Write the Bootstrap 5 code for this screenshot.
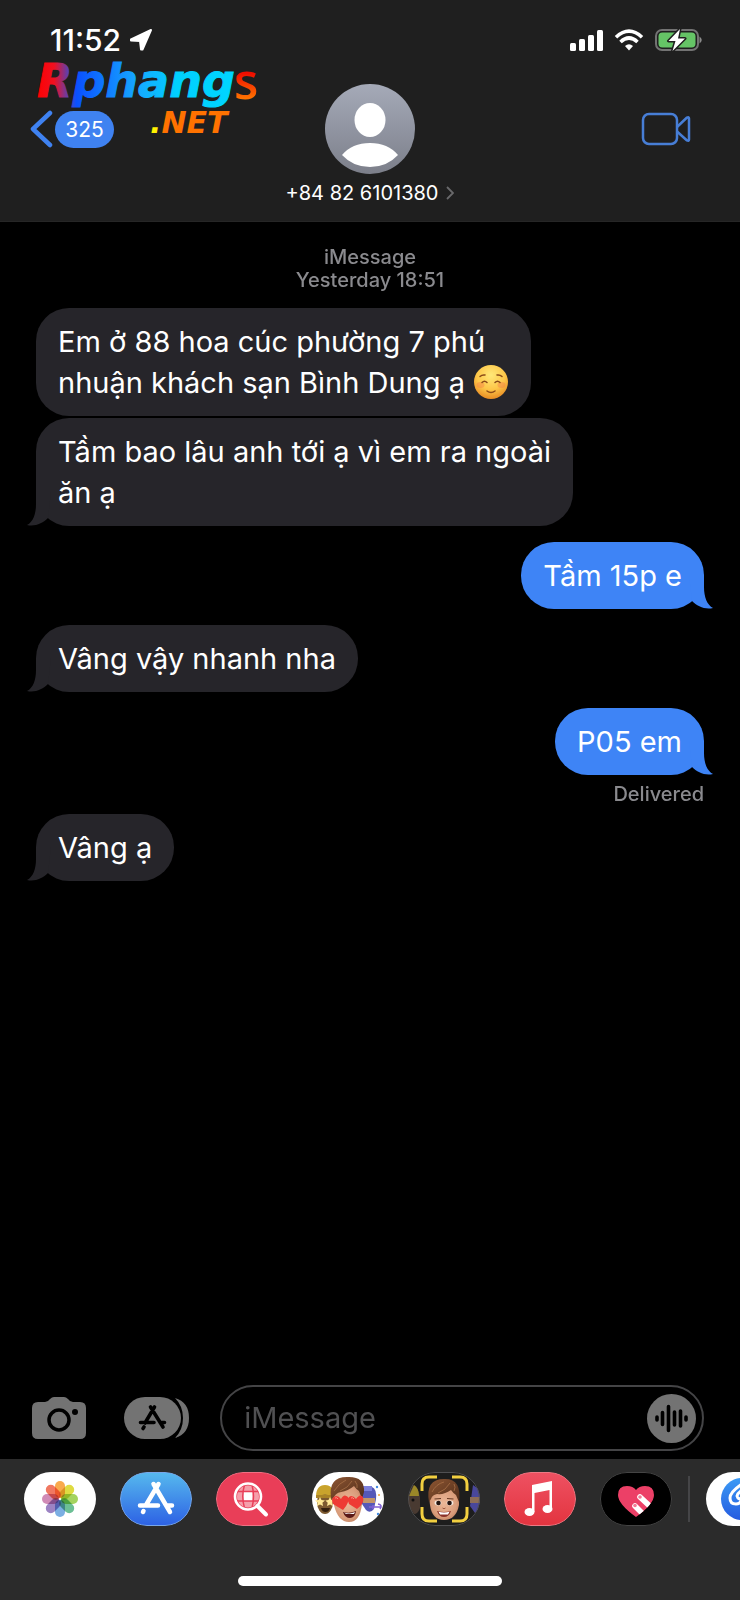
<!DOCTYPE html>
<html lang="vi">
<head>
<meta charset="utf-8">
<meta name="viewport" content="width=device-width, initial-scale=1">
<title>+84 82 6101380</title>
<link href="https://cdn.jsdelivr.net/npm/bootstrap@5.3.0/dist/css/bootstrap.min.css" rel="stylesheet">
<style>
body{background:#000;color:#fff;font-family:Inter,"Liberation Sans",sans-serif}
svg{display:block;flex:none}
.top-bar{background:#1f1f1f;padding:28px 30px 16px;border-bottom:1px solid #262626}
.status-row{height:24px;padding:0 8px 0 20px;margin-bottom:32px}
.clock{font-size:30px;line-height:24px;font-weight:500}
.site-logo{position:absolute;left:34px;top:54px;overflow:visible}
.nav-grid{display:grid;grid-template-columns:1fr auto 1fr;align-items:center}
.count-pill{background:#3f82f1;color:#fff;font-size:21px;line-height:37px;width:59px;border-radius:19px;text-align:center}
.video-btn{margin:0 19px 0 auto}
.contact-link{color:#fff;font-size:20px;line-height:24px;margin-top:7px}
.thread{padding:24px 36px 0}
.stamp{color:#8a8a8e;font-size:20px;line-height:23px;font-weight:500}
.bubble{position:relative;font-size:29px;line-height:41px;padding:13px 22px;border-radius:33px;width:fit-content}
.bubble-in{background:#26252a}
.bubble-out{background:#3e84f6;margin-left:auto}
.bubble-next{margin-top:2px}
.tail::after{content:"";position:absolute;bottom:0;left:-9px;width:24px;height:34px;background:inherit;clip-path:path("M9 0V12C9 22 6 30 0 33C8 35 16 31 21 26L24 0Z")}
.bubble-out.tail::after{left:auto;right:-9px;transform:scaleX(-1)}
.smile{display:inline-block;vertical-align:-7px}
.compose{padding:0 36px 8px 32px}
.compose-field{width:72%;height:66px;border:2px solid #444446;border-radius:33px;padding:0 6px 0 22px}
.compose-field input{font-size:29px;color:#fff;background:none;border:0;outline:0;min-width:0}
.compose-field input::placeholder{color:#505052;opacity:1}
.apps-btn{margin:0 30px 0 auto}
.drawer{background:#2b2b2b;padding:13px 0 14px}
.app-strip{gap:24px;padding-left:24px;margin-bottom:50px;overflow:hidden}
.app-pill{width:72px;height:54px;border-radius:27px;overflow:hidden;flex:none}
.strip-line{width:2px;height:46px;background:#454547;flex:none;margin:0 -8px}
.home-line{width:264px;height:10px;border-radius:5px;background:#fff}
.petals rect{mix-blend-mode:multiply}
</style>
</head>
<body>
<div class="d-flex flex-column min-vh-100 overflow-hidden">
<header class="top-bar position-relative">
  <div class="status-row d-flex align-items-center justify-content-between">
    <div class="d-flex align-items-center gap-2">
      <span class="clock">11:52</span>
      <svg width="24" height="24" viewBox="0 0 24 24" aria-hidden="true"><path d="M22 2 13.500 21.500H12L11 13 2 12.500V11.500Z" fill="#fff" stroke="#fff" stroke-width="2" stroke-linejoin="round"/></svg>
    </div>
    <svg width="134" height="24" viewBox="0 0 134 24" aria-hidden="true">
      <g fill="#fff"><rect x="2" y="15" width="6" height="8" rx="1.500"/><rect x="11" y="11" width="6" height="12" rx="1.500"/><rect x="20" y="7" width="6" height="16" rx="1.500"/><rect x="29" y="2" width="6" height="21" rx="1.500"/></g>
      <g fill="none" stroke="#fff" stroke-width="3.600"><path d="M48 9.200Q61 -2.800 74 9.200"/><path d="M52.500 14Q61 6 69.500 14"/></g><path d="M57 18Q61 14.500 65 18L61 22.500Z" fill="#fff"/>
      <rect x="88" y="2" width="42" height="20" rx="6" fill="none" stroke="#737373" stroke-width="2"/><rect x="90.500" y="4.500" width="37" height="15" rx="4" fill="#65c466"/><path d="M131.500 8.500Q136 12 131.500 15.500Z" fill="#8b8b8b"/>
      <path d="M112 1 100.500 13H107.500L104.500 23 117 10.500H110Z" fill="#fff" stroke="#1f1f1f" stroke-width="3" paint-order="stroke" stroke-linejoin="round"/>
    </svg>
  </div>
  <div class="nav-grid">
    <a href="#" class="d-flex align-items-center text-decoration-none" aria-label="Back">
      <svg width="25" height="38" viewBox="0 0 25 38"><path d="M20 3 3 19 20 35" fill="none" stroke="#3f82f1" stroke-width="4.500" stroke-linecap="round" stroke-linejoin="round"/></svg>
      <span class="count-pill">325</span>
    </a>
    <svg width="90" height="90" viewBox="0 0 90 90" role="img" aria-label="Contact photo"><defs><linearGradient id="av" x2="0" y2="1"><stop stop-color="#a5aab8"/><stop offset="1" stop-color="#7c7f8a"/></linearGradient></defs><circle cx="45" cy="45" r="45" fill="url(#av)"/><ellipse cx="45" cy="36" rx="15.500" ry="17" fill="#fff"/><path d="M17 71Q27 59 45 59T73 71Q62 83 45 83T17 71Z" fill="#fff"/></svg>
    <button class="btn p-0 border-0 video-btn" aria-label="Video call"><svg width="50" height="34" viewBox="0 0 50 34" fill="none" stroke="#477ed6" stroke-width="2.500" stroke-linejoin="round"><rect x="2" y="2" width="34" height="30" rx="6"/><path d="M36 15 46 5.500Q48 4.500 48 6.500V27.500Q48 29.500 46 28.500L36 19.500"/></svg></button>
  </div>
  <a href="#" class="contact-link d-flex justify-content-center align-items-center gap-2 text-decoration-none">+84 82 6101380
    <svg width="8" height="14" viewBox="0 0 8 14"><path d="M1 1 7 7 1 13" fill="none" stroke="#69696b" stroke-width="1.800"/></svg>
  </a>
  <svg class="site-logo" width="260" height="90" viewBox="0 0 260 90">
    <defs>
      <linearGradient id="lgA" gradientUnits="userSpaceOnUse" x1="2" x2="204" y1="0" y2="0"><stop stop-color="#f00"/><stop offset=".09" stop-color="#f01020"/><stop offset=".17" stop-color="#4447c8"/><stop offset=".2" stop-color="#0a50ff"/><stop offset=".5" stop-color="#16a8ff"/><stop offset=".7" stop-color="#00d0ff"/><stop offset="1" stop-color="#00d5ff"/></linearGradient>
      <linearGradient id="lgB" x2="0" y2="1"><stop offset=".4" stop-color="#f00d00"/><stop offset=".8" stop-color="#ff7a00"/></linearGradient>
      <linearGradient id="lgC" gradientUnits="userSpaceOnUse" x1="116" x2="192" y1="0" y2="0"><stop offset=".12" stop-color="#fff200"/><stop offset=".15" stop-color="#ff7200"/></linearGradient>
    </defs>
    <g font-family="'DejaVu Sans',sans-serif" font-weight="700" font-style="italic">
      <text x="3" y="43" font-size="46" fill="url(#lgA)" stroke="url(#lgA)" stroke-width="1">Rphang</text>
      <text x="116" y="79" font-size="30" fill="url(#lgC)">.NET</text>
    </g>
    <text x="200" y="45" font-family="'Open Sans',sans-serif" font-weight="600" font-size="50" fill="url(#lgB)">s</text>
  </svg>
</header>

<main class="thread flex-grow-1">
  <div class="stamp text-center">iMessage<br>Yesterday 18:51</div>
  <div class="bubble bubble-in mt-3">Em ở 88 hoa cúc phường 7 phú<br>nhuận khách sạn Bình Dung ạ <svg class="smile" width="36" height="36" viewBox="0 0 36 36" role="img" aria-label="☺️"><defs><radialGradient id="em" cx=".5" cy=".3" r=".7"><stop stop-color="#ffe878"/><stop offset=".6" stop-color="#fdc648"/><stop offset="1" stop-color="#e88c24"/></radialGradient></defs><circle cx="18" cy="18" r="17" fill="url(#em)"/><g fill="#f4784a" opacity=".4"><ellipse cx="7.500" cy="21" rx="4" ry="3"/><ellipse cx="28.500" cy="21" rx="4" ry="3"/></g><g fill="none" stroke="#8a4a18" stroke-width="1.500" stroke-linecap="round"><path d="M9 18.500Q11.500 16 14 18.500M22 18.500Q24.500 16 27 18.500M14 27Q18 30 22 27M7 12.500Q9 10.500 12 11M24 11Q27 10.500 29 12.500"/></g></svg></div>
  <div class="bubble bubble-in bubble-next tail">Tầm bao lâu anh tới ạ vì em ra ngoài<br>ăn ạ</div>
  <div class="bubble bubble-out tail mt-3">Tầm 15p e</div>
  <div class="bubble bubble-in tail mt-3">Vâng vậy nhanh nha</div>
  <div class="bubble bubble-out tail mt-3">P05 em</div>
  <div class="stamp text-end mt-2">Delivered</div>
  <div class="bubble bubble-in tail mt-2">Vâng ạ</div>
</main>

<form class="compose d-flex align-items-center">
  <button type="button" class="btn p-0 border-0" aria-label="Camera"><svg width="54" height="44" viewBox="0 0 54 44"><path d="M6 6H13Q16 6 18 3 20 1 22 1H32Q34 1 36 3 38 6 41 6H48Q54 6 54 12V37Q54 43 48 43H6Q0 43 0 37V12Q0 6 6 6Z" fill="#737373"/><circle cx="27" cy="24" r="10" fill="none" stroke="#000" stroke-width="3.500"/><circle cx="43" cy="16" r="3" fill="#000"/></svg></button>
  <button type="button" class="btn p-0 border-0 apps-btn" aria-label="Apps"><svg width="66" height="44" viewBox="0 0 66 44"><path d="M51 2Q65 6 65 22T51 42Q59 34 59 22T51 2Z" fill="#737373"/><rect x="0" y="1" width="57" height="42" rx="21" fill="#737373"/><g stroke="#000" stroke-width="3.600" stroke-linecap="round" fill="none"><path d="M30.500 11 21 27M26.500 11 39 31M16.500 26.500H30M36 26.500H40.500M20 31 19 32.500"/></g></svg></button>
  <div class="compose-field d-flex align-items-center flex-shrink-0">
    <input type="text" class="flex-grow-1 p-0" placeholder="iMessage" aria-label="iMessage">
    <button type="button" class="btn p-0 border-0" aria-label="Record audio"><svg width="49" height="49" viewBox="0 0 49 49"><circle cx="24.500" cy="24.500" r="24.500" fill="#737373"/><path d="M10 23V26M15.500 18.500V30.500M21.500 12.500V36.500M27.500 18V31M33.500 17V32M39 23V26" stroke="#000" stroke-width="3.600" stroke-linecap="round"/></svg></button>
  </div>
</form>

<footer class="drawer">
  <div class="app-strip d-flex align-items-center">
    <button class="btn p-0 border-0 app-pill" aria-label="Photos"><svg width="72" height="54" viewBox="0 0 72 54"><rect width="72" height="54" fill="#fff"/><g class="petals" transform="translate(36 27)" opacity=".9">
      <rect x="-5" y="-18" width="10" height="17" rx="5" fill="#f9a13a"/><rect x="-5" y="-18" width="10" height="17" rx="5" fill="#dcd82e" transform="rotate(45)"/><rect x="-5" y="-18" width="10" height="17" rx="5" fill="#9bcf4e" transform="rotate(90)"/><rect x="-5" y="-18" width="10" height="17" rx="5" fill="#5db88a" transform="rotate(135)"/><rect x="-5" y="-18" width="10" height="17" rx="5" fill="#6da6df" transform="rotate(180)"/><rect x="-5" y="-18" width="10" height="17" rx="5" fill="#9276bd" transform="rotate(225)"/><rect x="-5" y="-18" width="10" height="17" rx="5" fill="#cb7fae" transform="rotate(270)"/><rect x="-5" y="-18" width="10" height="17" rx="5" fill="#ef6a50" transform="rotate(315)"/></g></svg></button>
    <button class="btn p-0 border-0 app-pill" aria-label="App Store"><svg width="72" height="54" viewBox="0 0 72 54"><defs><linearGradient id="as" x2="0" y2="1"><stop stop-color="#56b9ee"/><stop offset="1" stop-color="#2d61e4"/></linearGradient></defs><rect x=".5" y=".5" width="71" height="53" rx="26.500" fill="url(#as)" stroke="#78a6e8"/><g stroke="#fff" stroke-width="4.500" stroke-linecap="round" fill="none"><path d="M38.500 12 26 33M33.500 12 50 40M20 33.500H38M46.500 33.500H52M23.500 39 23 40"/></g></svg></button>
    <button class="btn p-0 border-0 app-pill" aria-label="Images search"><svg width="72" height="54" viewBox="0 0 72 54"><rect x=".5" y=".5" width="71" height="53" rx="26.500" fill="#e93e58" stroke="#ef7083"/><circle cx="32" cy="24.500" r="11" fill="#f59fab"/><rect x="27.500" y="20" width="9" height="9" fill="#fff"/><path d="M20 19.500H44M20 29H44M28.500 13Q25 24 28.500 36M36 13Q39 24 36 36" fill="none" stroke="#e93e58" stroke-width="1.500"/><circle cx="32" cy="24.500" r="13" fill="none" stroke="#fff" stroke-width="2.600"/><path d="M41.500 34 50 42.500" stroke="#fff" stroke-width="4" stroke-linecap="round"/></svg></button>
    <button class="btn p-0 border-0 app-pill" aria-label="Memoji stickers"><svg width="72" height="54" viewBox="0 0 72 54"><defs><radialGradient id="sk" cx=".5" cy=".5" r=".6"><stop stop-color="#ecb898"/><stop offset=".7" stop-color="#d99c7a"/><stop offset="1" stop-color="#b9795a"/></radialGradient><linearGradient id="hr" x2="1" y2="1"><stop stop-color="#8e5632"/><stop offset="1" stop-color="#4e2c1a"/></linearGradient></defs><rect width="72" height="54" fill="#fff"/>
      <ellipse cx="13" cy="30" rx="8" ry="12" fill="#7d5a30"/><path d="M4 25Q4 13 13 13T22 25Q13 20 4 25Z" fill="#c9a32c"/><path d="M4 23H21V26H4Z" fill="#a98326"/><path d="m8 25 1.500 3 3.500.4-2.600 2.300.7 3.300L8 32.500 5 34l.7-3.300L3 28.400l3.500-.4Zm10 0 1.500 3 3 .4-2.300 2.300.7 3.300L18 32.500 15 34l.7-3.300-2.300-2.300 3.100-.4Z" fill="#ffe894"/><path d="M9 36H18Q17 40 13.500 40T9 36Z" fill="#34200f"/>
      <path d="M50 15H60Q65 17 64 27L62 37Q58 42 54 38L50 32Z" fill="#5558b8"/><path d="M50 14H60V19H50Z" fill="#7d80dc"/><path d="M51 26H63V31H51Z" fill="#c39569"/><path d="M57 35H69M61 33V37M66 32Q71 33 68 37" fill="none" stroke="#8061d4" stroke-width="1.500"/><circle cx="65" cy="15" r="1.200" fill="#438be2"/><circle cx="67" cy="23" r="1" fill="#f2a337"/><circle cx="66" cy="42" r="1.200" fill="#438be2"/>
      <path d="M21 22Q22 12 36 12T50 22V32Q48 50 37 50T22 33Z" fill="url(#sk)"/><path d="M19 26Q16 5 35 5 53 4 52 20L50 27 47 19Q44 17 42 14 36 19 29 20 23 21 21 27Z" fill="url(#hr)"/><path d="M22 19Q27 11 34 8M28 19Q36 16 40 9M45 16Q46 13 43 9" fill="none" stroke="#a87148" stroke-width=".8"/>
      <path d="M31 38 21 32Q18 25 24 24 27 24 29 27 32 21 36 25 38 30 31 38ZM45 37 37 32Q34 25 39 24 42 24 44 27 48 21 51 25 53 31 45 37Z" fill="#ee3a34"/><path d="M23 26Q25 25 26 27M39 26Q41 25 42 27" stroke="#ff8f80" fill="none"/><path d="M31 40Q38 42 44 39 43 46 38 46T31 40Z" fill="#5a1917"/><path d="M32 40.500Q38 42.500 43 40L42 42H34Z" fill="#fff"/></svg></button>
    <button class="btn p-0 border-0 app-pill" aria-label="Memoji"><svg width="72" height="54" viewBox="0 0 72 54"><rect x=".5" y=".5" width="71" height="53" rx="26.500" fill="#1d1d1d"/>
      <path d="M0 24 5 13Q11 17 12 25V36Q10 42 6 42L0 33Z" fill="#493a31"/><path d="M1 24 6 13Q11 16 11 24Z" fill="#9b8728"/><circle cx="5" cy="28" r="1.500" fill="#111"/><path d="M65 13 72 18V36L67 41 62 34Z" fill="#49479b"/><path d="M62 25H72V31H62Z" fill="#8d6d57"/>
      <path d="M21 24Q22 14 36 14T51 24V33Q48 48 36 48T22 33Z" fill="url(#sk)"/><path d="M21 30Q17 7 36 7 54 6 51 30L48 23Q45 21 43 18 36 23 29 22 24 23 23 27Z" fill="url(#hr)"/><path d="M24 20Q28 12 36 10M30 21Q38 18 42 11M46 19Q48 15 46 12" fill="none" stroke="#a87148" stroke-width=".8"/>
      <g fill="#f5e9e0"><ellipse cx="30" cy="31" rx="3.400" ry="2.400"/><ellipse cx="42" cy="31" rx="3.400" ry="2.400"/></g><g fill="#251510"><circle cx="30.500" cy="31" r="2.300"/><circle cx="41.500" cy="31" r="2.300"/></g><path d="M26.500 27 33 26.500M39 26.500 45.500 27" stroke="#673b26" stroke-width="1.200"/><path d="M34.500 36Q36 37.500 37.500 36" fill="none" stroke="#a05d42"/><path d="M29 39Q36 41 43 39 41 45 36 45T29 39Z" fill="#8b332a"/><path d="M30.500 39.800Q36 41 41.500 39.800L40 42.500H32Z" fill="#fff"/>
      <path d="M14 19V12Q14 5 21 5H29M44 5H52Q59 5 59 12V19M14 35V42Q14 49 21 49H29M44 49H52Q59 49 59 42V35" fill="none" stroke="#f2cf40" stroke-width="3"/><rect x=".5" y=".5" width="71" height="53" rx="26.500" fill="none" stroke="#505052"/></svg></button>
    <button class="btn p-0 border-0 app-pill" aria-label="Music"><svg width="72" height="54" viewBox="0 0 72 54"><defs><linearGradient id="mu" x2="0" y2="1"><stop stop-color="#ee5162"/><stop offset="1" stop-color="#e3343f"/></linearGradient></defs><rect x=".5" y=".5" width="71" height="53" rx="26.500" fill="url(#mu)" stroke="#ed7984"/><path d="M28 13 48 9V36H45.500V18L30.500 21V40H28Z" fill="#fff"/><ellipse cx="25.500" cy="40" rx="5" ry="4" fill="#fff"/><ellipse cx="43.500" cy="37" rx="5" ry="4" fill="#fff"/></svg></button>
    <button class="btn p-0 border-0 app-pill" aria-label="Digital Touch"><svg width="72" height="54" viewBox="0 0 72 54"><defs><clipPath id="hc"><path d="M36 45Q18 32 18 23 18 14 27 14 33 14 36 18 39 14 45 14 54 14 54 23 54 32 36 45Z"/></clipPath></defs><rect x=".5" y=".5" width="71" height="53" rx="26.500" fill="#000" stroke="#444"/><g clip-path="url(#hc)"><rect width="72" height="54" fill="#ec4067"/><path d="M35 34 47 46M40 25 55 39" stroke="#fff" stroke-width="5.600" stroke-linecap="round"/><circle cx="35" cy="33.500" r="1.800" fill="#f27c96"/><circle cx="40" cy="25" r="1.800" fill="#f27c96"/></g></svg></button>
    <div class="strip-line"></div>
    <button class="btn p-0 border-0 app-pill" aria-label="More apps"><svg width="72" height="54" viewBox="0 0 72 54"><defs><linearGradient id="mo" x2="0" y2="1"><stop stop-color="#3b9af5"/><stop offset="1" stop-color="#255be0"/></linearGradient></defs><rect width="72" height="54" fill="#fff"/><circle cx="36" cy="27" r="21" fill="url(#mo)"/><path d="M36 12Q24 20 24 26 24 32 30 32 35 32 36 26Q32 28 31 24 32 20 38 17" fill="none" stroke="#fff" stroke-width="3" stroke-linecap="round"/></svg></button>
  </div>
  <div class="home-line mx-auto"></div>
</footer>
</div>
<script src="https://cdn.jsdelivr.net/npm/bootstrap@5.3.0/dist/js/bootstrap.bundle.min.js"></script>
</body>
</html>
